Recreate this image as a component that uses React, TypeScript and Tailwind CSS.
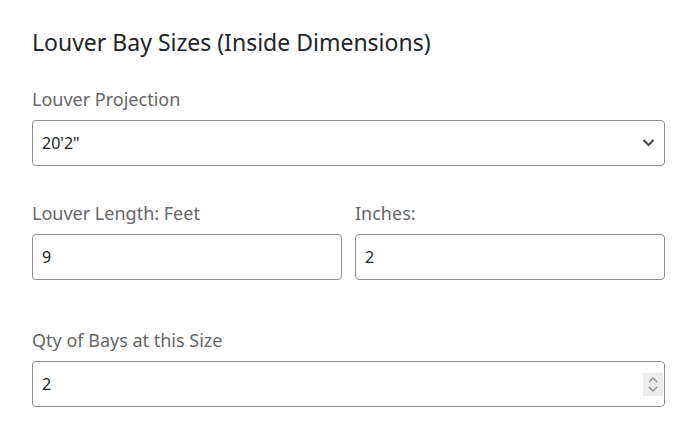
import { useState } from 'react';

const FONT = { fontFamily: '"Noto Sans", "Open Sans", sans-serif' };

function Label({ children }: { children: React.ReactNode }) {
  return <label className="block text-[18px] leading-[24px] text-[#666] mb-[9px]">{children}</label>;
}

const inputCls =
  'block w-full h-[46px] px-[9px] rounded-[4px] border border-[#8f8f8f] bg-white text-[16px] text-[#222] outline-none';

export default function App() {
  const [projection, setProjection] = useState('20\'2"');
  const [feet, setFeet] = useState('9');
  const [inches, setInches] = useState('2');
  const [qty, setQty] = useState('2');

  return (
    <div className="min-h-screen bg-white px-[32px] pt-[26px]" style={FONT}>
      <h2 className="text-[23px] leading-[32px] text-[#212529] mb-[29px]">Louver Bay Sizes (Inside Dimensions)</h2>

      <Label>Louver Projection</Label>
      <div className="relative w-[633px]">
        <select
          value={projection}
          onChange={(e) => setProjection(e.target.value)}
          className={`${inputCls} appearance-none`}
        >
          <option>20'2"</option>
          <option>18'0"</option>
          <option>16'0"</option>
        </select>
        <svg
          className="pointer-events-none absolute right-[10px] top-[18px]"
          width="13"
          height="10"
          viewBox="0 0 13 10"
          fill="none"
        >
          <path d="M1.5 2l5 5 5-5" stroke="#444" strokeWidth="2" />
        </svg>
      </div>

      <div className="mt-[35px] flex gap-[13px] w-[633px]">
        <div className="flex-1">
          <Label>Louver Length: Feet</Label>
          <input value={feet} onChange={(e) => setFeet(e.target.value)} className={inputCls} />
        </div>
        <div className="flex-1">
          <Label>Inches:</Label>
          <input value={inches} onChange={(e) => setInches(e.target.value)} className={inputCls} />
        </div>
      </div>

      <div className="mt-[48px] w-[633px]">
        <Label>Qty of Bays at this Size</Label>
        <div className="relative">
          <input value={qty} onChange={(e) => setQty(e.target.value)} className={inputCls} />
          <div className="pointer-events-none absolute right-[2px] top-[12px] w-[20px] h-[23px] bg-[#ececec] flex flex-col items-center justify-center gap-[3px]">
            <svg width="10" height="6" viewBox="0 0 10 6" fill="none">
              <path d="M1 5l4-4 4 4" stroke="#8a8a8a" strokeWidth="1.4" />
            </svg>
            <svg width="10" height="6" viewBox="0 0 10 6" fill="none">
              <path d="M1 1l4 4 4-4" stroke="#8a8a8a" strokeWidth="1.4" />
            </svg>
          </div>
        </div>
      </div>
    </div>
  );
}
